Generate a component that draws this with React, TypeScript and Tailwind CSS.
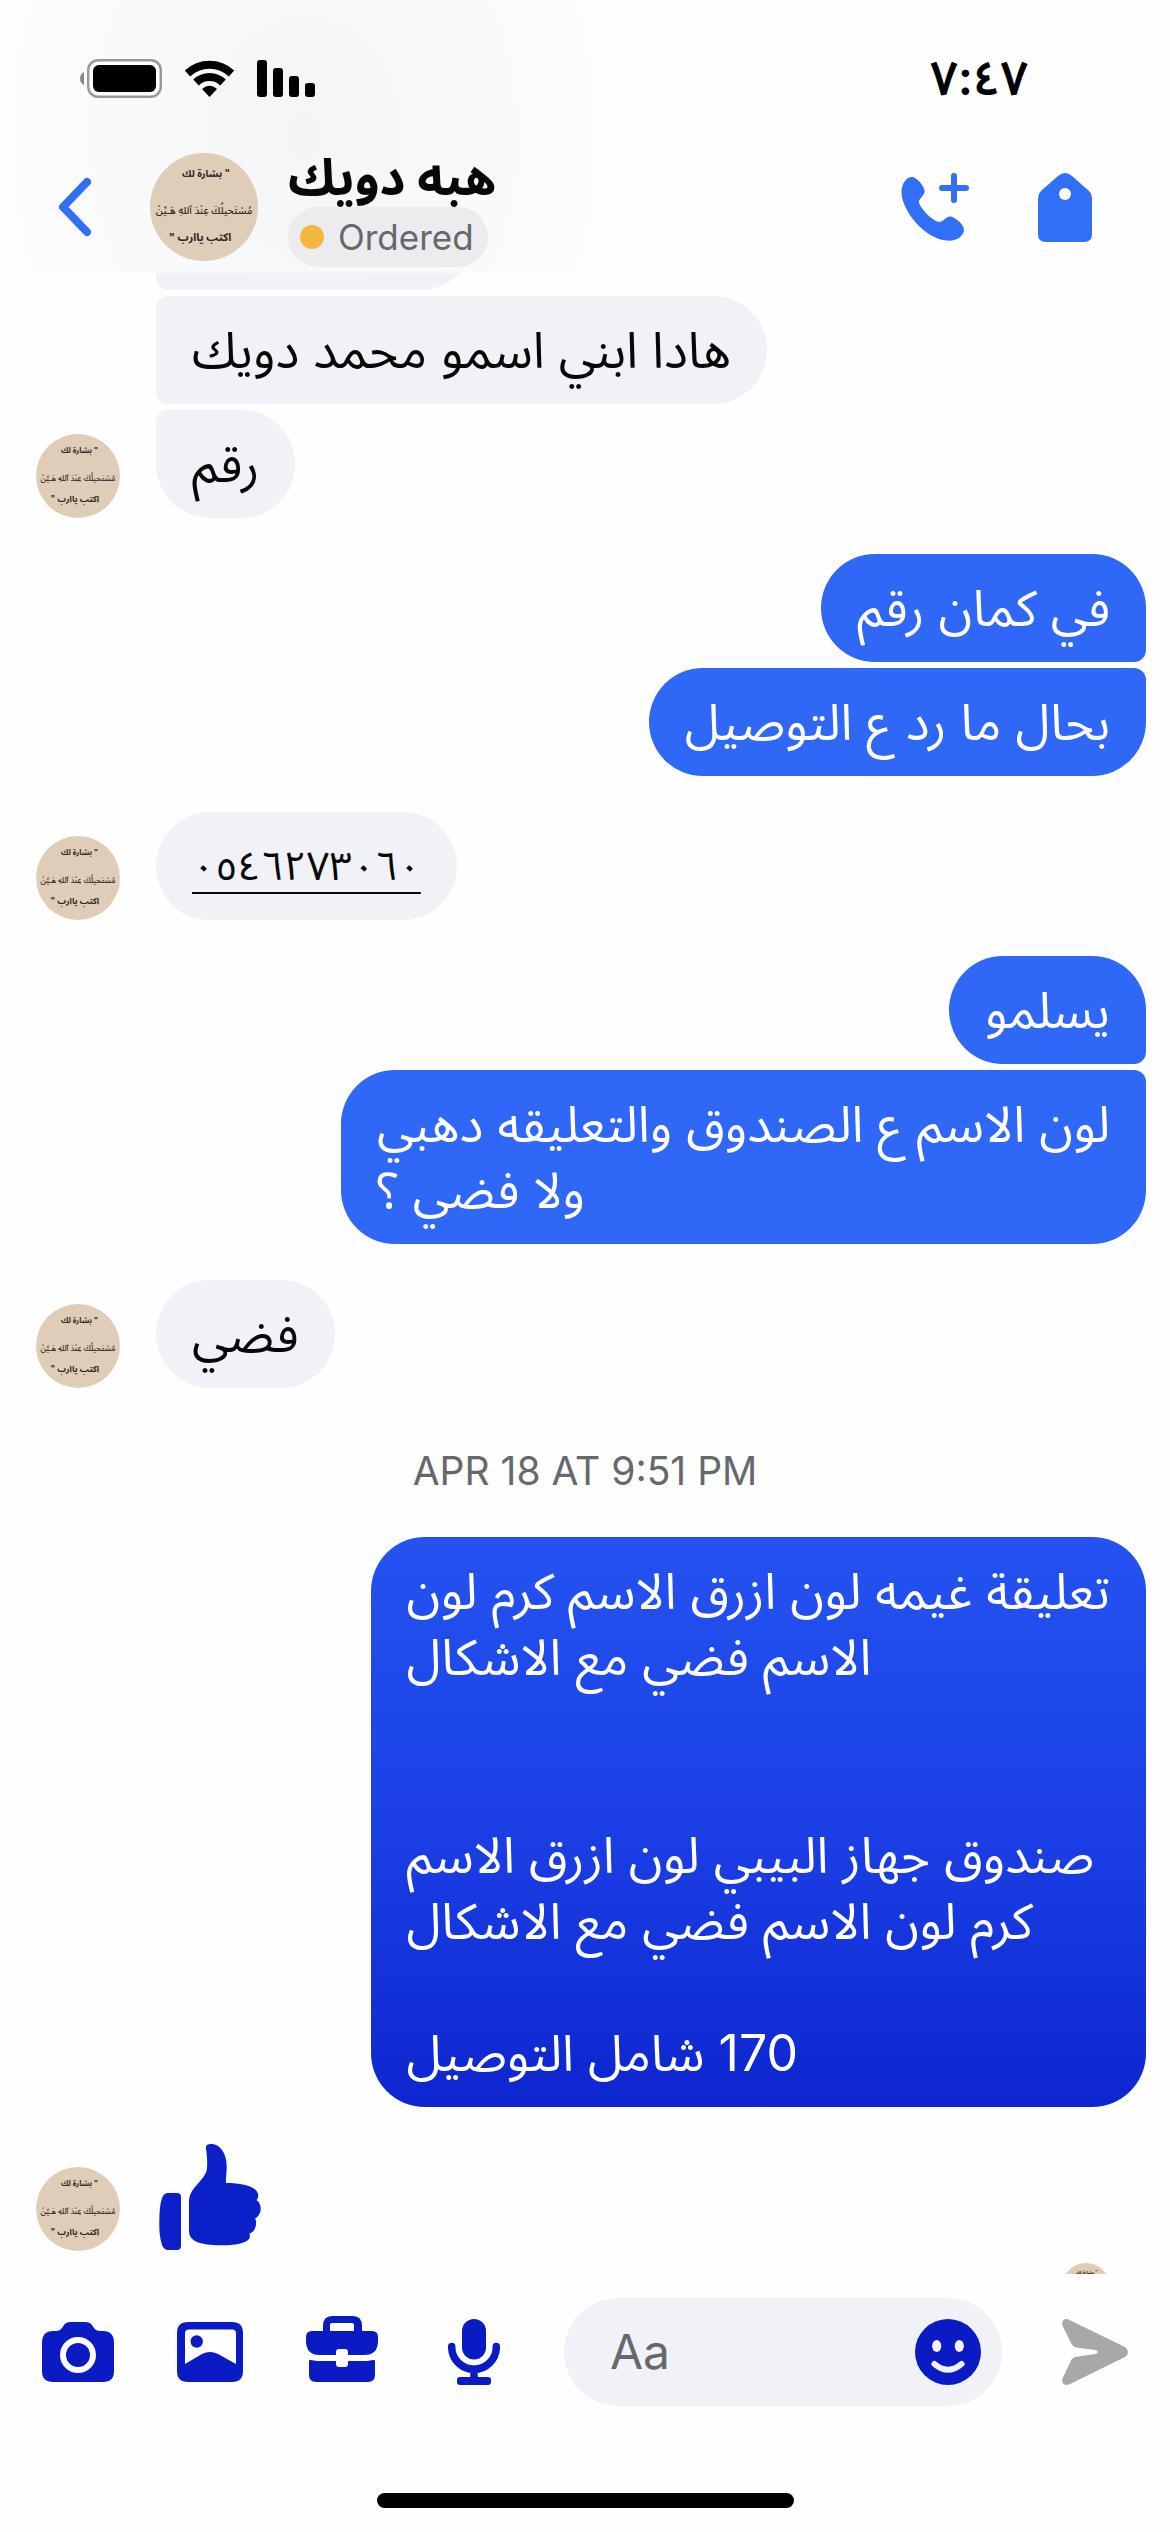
import React from 'react';

type Message = {
  id: number;
  text: string;
  first?: boolean;
  last?: boolean;
  link?: boolean;
};

type Group = {
  id: number;
  from: 'me' | 'them';
  messages: Message[];
};

const groups: Group[] = [
  {
    id: 1,
    from: 'them',
    messages: [
      { id: 1, text: 'هادا ابني اسمو محمد دويك' },
      { id: 2, text: 'رقم', last: true },
    ],
  },
  {
    id: 2,
    from: 'me',
    messages: [
      { id: 3, text: 'في كمان رقم', first: true },
      { id: 4, text: 'بحال ما رد ع التوصيل', last: true },
    ],
  },
  {
    id: 3,
    from: 'them',
    messages: [{ id: 5, text: '٠٥٤٦٢٧٣٠٦٠', first: true, last: true, link: true }],
  },
  {
    id: 4,
    from: 'me',
    messages: [
      { id: 6, text: 'يسلمو', first: true },
      { id: 7, text: 'لون الاسم ع الصندوق والتعليقه دهبي\nولا فضي ؟', last: true },
    ],
  },
  {
    id: 5,
    from: 'them',
    messages: [{ id: 8, text: 'فضي', first: true, last: true }],
  },
];

const orderText =
  'تعليقة غيمه لون ازرق الاسم كرم لون\nالاسم فضي مع الاشكال\n\n\nصندوق جهاز البيبي لون ازرق الاسم\nكرم لون الاسم فضي مع الاشكال\n\n170 شامل التوصيل';

const Avatar = ({ className }: { className: string }) => (
  <svg viewBox="0 0 108 108" className={`shrink-0 rounded-full bg-[#dfcdb8] ${className}`}>
    <g fill="#2b2622" textAnchor="middle" direction="rtl">
      <text x="56" y="24" fontSize="10" fontWeight="700">" بشارة لك</text>
      <text x="54" y="61" fontSize="10" fontWeight="500">مُسْتَحيلُكَ عِنْدَ ٱللهِ هَـيِّنْ</text>
      <text x="50" y="88" fontSize="11" fontWeight="700">اكتب ياارب "</text>
    </g>
  </svg>
);

const Bubble = ({ message, from }: { message: Message; from: 'me' | 'them' }) => {
  const mine = from === 'me';
  const corners = mine
    ? `rounded-l-[54px] ${message.first ? 'rounded-tr-[54px]' : 'rounded-tr-xl'} ${message.last ? 'rounded-br-[54px]' : 'rounded-br-xl'}`
    : `rounded-r-[54px] ${message.first ? 'rounded-tl-[54px]' : 'rounded-tl-xl'} ${message.last ? 'rounded-bl-[54px]' : 'rounded-bl-xl'}`;

  return (
    <div
      dir="rtl"
      className={`w-fit whitespace-pre-line px-9 py-[21px] text-left ${corners} ${mine ? 'bg-[#2f67f6] text-white' : 'bg-[#f1f2f7] text-[#080809]'}`}
    >
      {message.link ? (
        <a href="tel:0546273060" className="block text-[40px] underline decoration-2 underline-offset-[12px]">{message.text}</a>
      ) : (
        message.text
      )}
    </div>
  );
};

const StatusBar = () => (
  <div className="flex items-center justify-between pl-20 pr-[142px] pt-12">
    <div className="flex items-center gap-[22px]">
      <svg width="82" height="39" viewBox="0 0 82 39">
        <path d="M4 13Q0 15 0 19.500T4 26Z" fill="#8a8a8b" />
        <rect x="8.200" y="1.200" width="72.600" height="36.600" rx="10" fill="#fff" stroke="#98989a" strokeWidth="2.400" />
        <rect x="13" y="6" width="63" height="27" rx="6" />
      </svg>
      <svg width="51" height="37" viewBox="0 0 51 37">
        <path d="M3.500 13.500A32 32 0 0 1 47.500 13.500M12 22.500A19.500 19.500 0 0 1 39 22.500" fill="none" stroke="#000" strokeWidth="8" />
        <path d="M18 29Q25.500 22.500 33 29L25.500 37Z" />
      </svg>
      <svg width="58" height="37" viewBox="0 0 58 37">
        <rect width="10" height="37" rx="3" />
        <rect x="16" y="8" width="10" height="29" rx="3" />
        <rect x="32" y="16" width="10" height="21" rx="3" />
        <rect x="48" y="23" width="10" height="14" rx="3" />
      </svg>
    </div>
    <time className="text-[48px] font-semibold leading-[60px] text-black">٧:٤٧</time>
  </div>
);

const Header = () => (
  <header className="h-[273px] shrink-0 bg-[radial-gradient(ellipse_30%_160%_at_26%_50%,#f4f5f7,#fefefe)]">
    <StatusBar />
    <div className="flex items-center pl-[58px] pr-[78px] pt-[39px]">
      <button aria-label="Back" className="mr-[59px]">
        <svg width="33" height="60" viewBox="0 0 33 60">
          <path d="M29 5L5 30L29 55" fill="none" stroke="#316ff6" strokeWidth="8" strokeLinecap="round" strokeLinejoin="round" />
        </svg>
      </button>
      <Avatar className="size-[108px]" />
      <div className="ml-[30px] flex flex-col items-start">
        <h1 dir="rtl" className="h-[60px] text-[50px] font-bold leading-[60px] text-[#080809]">هبه دويك</h1>
        <span className="flex h-[60px] items-center gap-[14px] rounded-full bg-[#ececee] pl-3 pr-[14px] text-[35px] text-[#65686c]">
          <span className="size-6 rounded-full bg-[#f4b740]" />
          Ordered
        </span>
      </div>
      <div className="ml-auto flex gap-[69px]">
        <button aria-label="Call">
          <svg width="68" height="69" viewBox="0 0 68 69" fill="#316ff6">
            <path d="M.5 19C.5 10 6 4 11 4C16 4 24 14 23.600 18.500C23.500 22 18 26 18 29C18 34 32 49 38.500 49C42 49 45 43.500 49 43.500C53 43.500 63 51 63 57C63 62 57 67.700 48 67.700C25 67.700 .5 38 .5 19Z" />
            <path d="M53 3V27M41 15H65" stroke="#316ff6" strokeWidth="6" strokeLinecap="round" />
          </svg>
        </button>
        <button aria-label="Label">
          <svg width="54" height="69" viewBox="0 0 54 69" fill="#316ff6">
            <path d="M20 3Q27-3 34 3L51 18Q54 21 54 25V61Q54 69 46 69H8Q0 69 0 61V25Q0 21 3 18Z" />
            <circle cx="27" cy="21" r="6" fill="#fff" />
          </svg>
        </button>
      </div>
    </div>
  </header>
);

const Composer = () => (
  <footer className="h-[258px] shrink-0 pt-6">
    <div className="flex h-[108px] items-center pl-[42px] pr-[42px] text-[#0a1bc4]">
      <button aria-label="Camera" className="mr-[63px]">
        <svg width="72" height="66" viewBox="0 -3 72 66" fill="currentColor">
          <path d="M11 9H14Q18 9 20 6L22 3Q24 0 29 0H43Q48 0 50 3L52 6Q54 9 58 9H61Q72 9 72 21V49Q72 60 61 60H11Q0 60 0 49V21Q0 9 11 9Z" />
          <circle cx="36" cy="33" r="15" fill="none" stroke="#fff" strokeWidth="6" />
        </svg>
      </button>
      <button aria-label="Photos" className="mr-[63px]">
        <svg width="66" height="66" viewBox="0 -3 66 66" fill="currentColor">
          <path fillRule="evenodd" d="M11 0H55Q66 0 66 11V49Q66 60 55 60H11Q0 60 0 49V11Q0 0 11 0ZM12 7.500Q8 7.500 8 11.500V42L25 32Q33 28 41 32L59 42V11.500Q59 7.500 55 7.500Z" />
          <circle cx="19.700" cy="19.500" r="6.200" />
        </svg>
      </button>
      <button aria-label="Business tools" className="mr-[70px]">
        <svg width="72" height="72" viewBox="0 0 72 72" fill="currentColor">
          <path fillRule="evenodd" d="M17 15V10Q17 0 26 0H47Q56 0 56 10V15H66Q72 15 72 21V25Q72 39 58 39H42V36Q42 33 39 33H33Q30 33 30 36V39H14Q0 39 0 25V21Q0 15 6 15ZM24 15H48V9Q48 7 46 7H26Q24 7 24 9Z" />
          <path d="M3 45Q3 43.500 5 44L11 45H30V48Q30 51 33 51H39Q42 51 42 48V45H61L67 44Q69 43.500 69 45V59Q69 66 62 66H10Q3 66 3 59Z" />
        </svg>
      </button>
      <button aria-label="Voice message" className="mr-16">
        <svg width="52" height="66" viewBox="0 0 52 66" fill="currentColor">
          <rect x="14" width="24" height="40.500" rx="12" />
          <path d="M3.700 27.500V28A22.300 22.300 0 0 0 48.300 28V27.500M26 50V60" fill="none" stroke="currentColor" strokeWidth="7.500" strokeLinecap="round" />
          <rect x="9" y="58" width="34" height="8" rx="3" />
        </svg>
      </button>
      <label className="flex h-[108px] min-w-0 flex-1 items-center rounded-full bg-[#f1f2f7] pl-[46px] pr-[21px]">
        <input type="text" aria-label="Message" placeholder="Aa" className="min-w-0 flex-1 bg-transparent text-[48px] text-[#080809] outline-none placeholder:text-[#65686c]" />
        <button aria-label="Emoji">
          <svg width="66" height="66" viewBox="0 0 66 66">
            <circle cx="33" cy="33" r="33" fill="currentColor" />
            <g fill="#f1f2f7">
              <ellipse cx="21.700" cy="27" rx="4.600" ry="6" />
              <ellipse cx="44.300" cy="27" rx="4.600" ry="6" />
            </g>
            <path d="M19.500 45Q33 56.500 46.500 45" fill="none" stroke="#f1f2f7" strokeWidth="6" strokeLinecap="round" />
          </svg>
        </button>
      </label>
      <button aria-label="Send" className="ml-[60px]">
        <svg width="66" height="66" viewBox="0 0 66 66" fill="#a8a8a8">
          <path d="M.3 6Q-.5 1 4 0Q6 0 8 1.300L63 28Q66 30 66 33Q66 36 63 38L8 65Q6 66 4 66Q-.5 65 .3 60L9 41.500Q10 39 13 38L33 35Q36 34.500 36 33Q36 31.500 33 31L14 28.500Q11 28 9.500 25Z" />
        </svg>
      </button>
    </div>
    <div className="mx-auto mt-[87px] h-[15px] w-[417px] rounded-full bg-black" />
  </footer>
);

const App = () => (
  <div className="flex h-screen flex-col overflow-hidden bg-[#fefefe] font-['Inter','Noto_Sans_Arabic','DejaVu_Sans',sans-serif]">
    <Header />

    <main className="min-h-0 flex-1 overflow-hidden px-6 text-[50px] leading-[66px]">
      <div className="-mt-[91px] mb-1.5 ml-[132px] h-[108px] w-[318px] rounded-l-xl rounded-r-[54px] bg-[#f1f2f7]" />
      <div className="flex flex-col gap-9">
        {groups.map((group) => (
          <section key={group.id} className={`flex items-end gap-9 ${group.from === 'me' ? 'justify-end' : 'pl-3'}`}>
            {group.from === 'them' && <Avatar className="size-[84px]" />}
            <div className={`flex flex-col gap-1.5 ${group.from === 'me' ? 'items-end' : 'items-start'}`}>
              {group.messages.map((message) => (
                <Bubble key={message.id} message={message} from={group.from} />
              ))}
            </div>
          </section>
        ))}
      </div>

      <p className="pb-[42px] pt-[59px] text-center text-[39px] leading-[48px] text-[#65686c]">APR 18 AT 9:51 PM</p>

      <div
        dir="rtl"
        className="ml-auto w-fit whitespace-pre-line rounded-[54px] bg-linear-to-b from-[#2453f0] via-[#1b40e6] to-[#0e25cf] px-9 py-[21px] text-left text-white"
      >
        {orderText}
      </div>

      <div className="mt-9 flex items-end gap-9 pl-3">
        <Avatar className="size-[84px]" />
        <svg width="108" height="108" viewBox="-3 -1 108 108" fill="#0b20c8">
          <path d="M9 49H18Q22 49 22 53V102Q22 106 18 106H9Q5 106 3 101Q0 92 .3 78Q.3 62 3 54Q5 49 9 49Z" />
          <path d="M47 5C46.500 1 49 0 52 0C62 0 68 11 67.700 23C67.700 30 66.500 36 67 39C84 39 99 43 99.200 51C99.500 53 98.500 55 97.500 56C100 58 102 61 101.700 65C101.700 69 99 73 96 74.500C98 77 98 87 90.500 89.500C92 95 89 97 83 99C75 102 55 101.500 48 100.500C38 99 30 96 30 87V57C30 52 32 48 36 43C42 36 48 30 48 24C48.500 18 48 11 47 5Z" />
        </svg>
      </div>
      <Avatar className="ml-auto mr-9 mt-3 size-12" />
    </main>

    <Composer />
  </div>
);

export default App;
